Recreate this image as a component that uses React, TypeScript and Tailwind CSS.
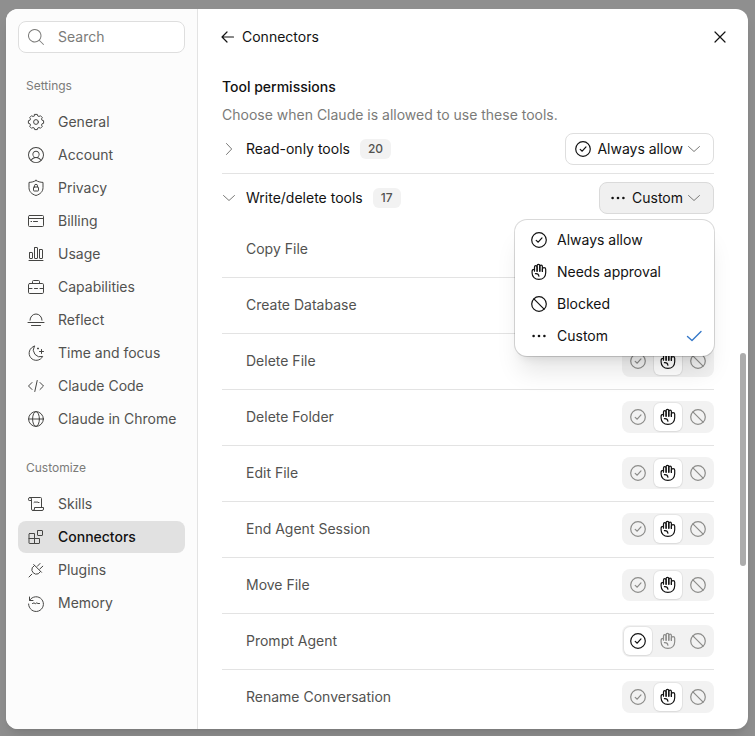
import type { ReactNode } from "react"
import { PiMagnifyingGlassLight, PiUserCircleLight } from "react-icons/pi"
import clsx from "clsx"

type Permission = "allow" | "approval" | "blocked"

function Icon({ children, className }: { children: ReactNode; className?: string }) {
  return (
    <svg
      viewBox="0 0 20 20"
      fill="none"
      stroke="currentColor"
      strokeLinecap="round"
      strokeLinejoin="round"
      aria-hidden="true"
      className={clsx("size-5 shrink-0", className)}
    >
      {children}
    </svg>
  )
}

const AllowIcon = () => (
  <Icon>
    <g strokeWidth="1.2">
      <circle cx="10" cy="10" r="7.3" />
      <path d="m7.2 10.4 2 1.8 3.8-4.3" />
    </g>
  </Icon>
)

const HandIcon = () => (
  <Icon>
    <g strokeWidth="1.2">
      <path d="M5.5 9.2V4.9a1.3 1.3 0 0 1 2.6 0v4.3" />
      <path d="M8.1 9.2V3.7a1.35 1.35 0 0 1 2.7 0v5.5" />
      <path d="M10.8 9.2V4.5a1.3 1.3 0 0 1 2.6 0v4.9" />
      <path d="M13.4 9.4V7.2a1.65 1.65 0 0 1 3.3 0v3.6c0 4-2.8 6.6-6.8 6.6s-6.8-2.5-6.8-6.3V9.2c0-1.1.9-1.8 2.4-1.8" />
      <path d="M6.4 11.6c2-.2 3.3.8 3.5 2.6" />
    </g>
  </Icon>
)

const BlockedIcon = () => (
  <Icon>
    <g strokeWidth="1.2">
      <circle cx="10" cy="10" r="7.3" />
      <path d="m4.9 4.9 10.2 10.2" />
    </g>
  </Icon>
)

const DotsIcon = () => (
  <Icon>
    <g fill="currentColor" stroke="none">
      <circle cx="4.6" cy="10" r="1.3" />
      <circle cx="10" cy="10" r="1.3" />
      <circle cx="15.4" cy="10" r="1.3" />
    </g>
  </Icon>
)

const ChevronDown = () => (
  <svg viewBox="0 0 14 14" fill="none" stroke="currentColor" strokeLinecap="round" strokeLinejoin="round" aria-hidden="true" className="size-3.5 shrink-0 text-[#7a7a78]">
    <path d="m1.5 4.5 5.5 5 5.5-5" />
  </svg>
)

const ChevronRight = () => (
  <svg viewBox="0 0 14 14" fill="none" stroke="currentColor" strokeLinecap="round" strokeLinejoin="round" aria-hidden="true" className="size-3.5 shrink-0 text-[#7a7a78]">
    <path d="M4.5 1.5 9.7 7l-5.2 5.5" />
  </svg>
)

const settings = [
  {
    name: "General",
    icon: (
      <Icon>
        <path d="M8.7 2.4h2.6l.4 1.5 1.4.6 1.3-.8 1.9 1.9-.8 1.3.6 1.4 1.5.4v2.6l-1.5.4-.6 1.4.8 1.3-1.9 1.9-1.3-.8-1.4.6-.4 1.5H8.700l-.4-1.500-1.400-.6-1.300.8-1.900-1.900.8-1.300-.6-1.400-1.500-.4V8.700l1.500-.4.6-1.400-.8-1.300 1.900-1.900 1.300.8 1.400-.6Z" />
        <circle cx="10" cy="10" r="2.4" />
      </Icon>
    ),
  },
  { name: "Account", icon: <PiUserCircleLight className="size-5 shrink-0" /> },
  {
    name: "Privacy",
    icon: (
      <Icon>
        <path d="M10 2.5c2 1.2 4.4 1.8 7 1.9v5.2c0 3.8-2.4 6.5-7 7.9-4.6-1.4-7-4.1-7-7.9V4.4c2.6-.1 5-.7 7-1.9Z" />
        <rect x="7.5" y="9" width="5" height="4" rx=".6" />
        <path d="M8.5 9V7.8a1.5 1.5 0 0 1 3 0V9" />
      </Icon>
    ),
  },
  {
    name: "Billing",
    icon: (
      <Icon>
        <rect x="2.5" y="4.5" width="15" height="11" rx="1" />
        <path d="M2.5 7.5h15M5 10.5h.6M7.5 10.5h4" />
      </Icon>
    ),
  },
  {
    name: "Usage",
    icon: (
      <Icon>
        <rect x="3.5" y="8.5" width="3" height="6" rx=".4" />
        <rect x="8.5" y="3.5" width="3" height="11" rx=".4" />
        <rect x="13.5" y="5.5" width="3" height="9" rx=".4" />
        <path d="M3 16.5h14" />
      </Icon>
    ),
  },
  {
    name: "Capabilities",
    icon: (
      <Icon>
        <rect x="2.5" y="6.5" width="15" height="10" rx="1.2" />
        <path d="M6.5 6.5v-2a1 1 0 0 1 1-1h5a1 1 0 0 1 1 1v2M2.5 11.5H6M8.5 11.5h3M14 11.5h3.5" />
      </Icon>
    ),
  },
  {
    name: "Reflect",
    icon: (
      <Icon>
        <path d="M4 10.2a6 6.2 0 0 1 12 0M2 12.5h16M5.5 15.5h9" />
      </Icon>
    ),
  },
  {
    name: "Time and focus",
    icon: (
      <Icon>
        <path d="M8.3 3.2a7.2 7.2 0 1 0 8.4 10.2A7 7 0 0 1 8.300 3.200ZM15.500 6.500v4M13.500 8.500h4M12 5v1M11.500 5.500h1" />
      </Icon>
    ),
  },
  {
    name: "Claude Code",
    icon: (
      <Icon>
        <path d="M6 6.5 2.5 10 6 13.5M14 6.5l3.5 3.5-3.5 3.5M11.2 4.5 8.8 15.5" />
      </Icon>
    ),
  },
  {
    name: "Claude in Chrome",
    icon: (
      <Icon>
        <circle cx="10" cy="10" r="7.4" />
        <ellipse cx="10" cy="10" rx="3.4" ry="7.4" />
        <path d="M2.6 10h14.8" />
      </Icon>
    ),
  },
]

const customize = [
  {
    name: "Skills",
    icon: (
      <Icon>
        <path d="M5.5 6.5H3.2a.7.7 0 0 1-.7-.7V5A1.5 1.5 0 0 1 4 3.5h10.5a1 1 0 0 1 1 1v9M4 3.5A1.5 1.5 0 0 1 5.5 5v10A1.5 1.5 0 0 0 7 16.5h9a1.5 1.5 0 0 0 1.5-1.500v-1.500h-9V15A1.500 1.500 0 0 1 7 16.500M8 8.500l1-.8 1 .8 1-.8 1 .8h1" />
      </Icon>
    ),
  },
  {
    name: "Connectors",
    icon: (
      <Icon>
        <path d="M3.5 6.5h5v10h-5a.5.5 0 0 1-.5-.5V7a.5.5 0 0 1 .5-.5ZM3 11.5h10.5V16a.5.5 0 0 1-.5.5H8.5" />
        <rect x="11.5" y="3.5" width="5" height="5" rx=".5" />
      </Icon>
    ),
  },
  {
    name: "Plugins",
    icon: (
      <Icon>
        <path d="m7.7 4.5 7.8 7.8M3 17l2.800-2.800M8.600 5.400 6.200 7.800a4.600 4.600 0 0 0 6 6l2.400-2.400M11.300 6.300l2.700-2.800M13.800 9l3-2.800" />
      </Icon>
    ),
  },
  {
    name: "Memory",
    icon: (
      <Icon>
        <path d="M3.5 4v3.5H7M3.7 7.2A7.4 7.4 0 1 1 2.6 11M6.5 10.5l1.5-.6 1.3.8 1.4-.8 1.3.6h1.5" />
      </Icon>
    ),
  },
]

const options = [
  { name: "Always allow", icon: <AllowIcon /> },
  { name: "Needs approval", icon: <HandIcon /> },
  { name: "Blocked", icon: <BlockedIcon /> },
  { name: "Custom", icon: <DotsIcon />, selected: true },
]

const permissions: { value: Permission; label: string; icon: ReactNode }[] = [
  { value: "allow", label: "Always allow", icon: <AllowIcon /> },
  { value: "approval", label: "Needs approval", icon: <HandIcon /> },
  { value: "blocked", label: "Blocked", icon: <BlockedIcon /> },
]

const tools: { name: string; permission: Permission }[] = [
  { name: "Copy File", permission: "approval" },
  { name: "Create Database", permission: "approval" },
  { name: "Delete File", permission: "approval" },
  { name: "Delete Folder", permission: "approval" },
  { name: "Edit File", permission: "approval" },
  { name: "End Agent Session", permission: "approval" },
  { name: "Move File", permission: "approval" },
  { name: "Prompt Agent", permission: "allow" },
  { name: "Rename Conversation", permission: "approval" },
]

function NavGroup({ title, items }: { title: string; items: { name: string; icon: ReactNode }[] }) {
  return (
    <div className="mt-[23px]">
      <h2 className="mb-2.5 px-2 text-xs leading-5 text-[#7b7b79]">{title}</h2>
      <ul className="flex flex-col gap-px">
        {items.map((item) => {
          const active = item.name === "Connectors"
          return (
            <li key={item.name}>
              <button
                type="button"
                aria-current={active ? "page" : undefined}
                className={clsx(
                  "flex h-8 w-full items-center gap-3 rounded-lg px-2 whitespace-nowrap",
                  active ? "bg-[#e1e1e1] font-medium text-[#121212]" : "text-[#525250]"
                )}
              >
                <span className="text-[#454543]">{item.icon}</span>
                {item.name}
              </button>
            </li>
          )
        })}
      </ul>
    </div>
  )
}

function ToolRow({ name, permission }: { name: string; permission: Permission }) {
  return (
    <li className="flex h-14 items-center justify-between border-b border-[#e3e3e3] pb-px pl-6 last:border-transparent">
      <span className="text-[#525250]">{name}</span>
      <div role="group" aria-label={name} className="flex gap-0.5 rounded-lg bg-[#f2f2f2] p-0.5">
        {permissions.map((p) => (
          <button
            key={p.value}
            type="button"
            aria-label={p.label}
            aria-pressed={p.value === permission}
            className={clsx(
              "flex size-7 items-center justify-center rounded-md",
              p.value === permission ? "bg-white text-[#121212] shadow-xs ring-1 ring-black/5" : "text-[#8c8c8a]"
            )}
          >
            {p.icon}
          </button>
        ))}
      </div>
    </li>
  )
}

export default function App() {
  return (
    <div className="h-screen bg-[#8f8f8f] pt-[9px] pr-[7px] pb-[7px] pl-1.5 font-['Inter',sans-serif] text-sm text-[#121212]">
      <div role="dialog" aria-label="Settings" className="relative flex h-full overflow-hidden rounded-xl bg-white shadow-lg">
        {/* Sidebar */}
        <nav className="w-48 shrink-0 border-r border-[#e3e3e3] bg-[#fcfcfc] p-3">
          <label className="flex h-8 items-center gap-3 rounded-lg border border-[#dedede] bg-white px-[7px] text-[#7b7b79]">
            <PiMagnifyingGlassLight className="size-5 shrink-0" />
            <input type="search" aria-label="Search" placeholder="Search" className="w-full min-w-0 outline-none placeholder:text-[#7b7b79]" />
          </label>
          <NavGroup title="Settings" items={settings} />
          <NavGroup title="Customize" items={customize} />
        </nav>

        {/* Main panel */}
        <main className="flex min-w-0 flex-1 flex-col">
          <header className="flex h-14 shrink-0 items-center justify-between pr-[18px] pl-5">
            <button type="button" className="flex items-center gap-1">
              <Icon>
                <path d="M15.5 10h-11M9 5l-5 5 5 5" strokeWidth="1.2" />
              </Icon>
              Connectors
            </button>
            <button type="button" aria-label="Close">
              <Icon>
                <path d="m5 5 10 10M15 5 5 15" strokeWidth="1.2" />
              </Icon>
            </button>
          </header>

          <div className="min-h-0 flex-1 overflow-hidden pt-3 pr-[34px] pl-6">
            <h3 className="mb-2 leading-5 font-medium">Tool permissions</h3>
            <p className="leading-5 text-[#7b7b79]">Choose when Claude is allowed to use these tools.</p>

            <div className="flex items-center justify-between border-b border-[#e3e3e3] py-2">
              <button type="button" aria-expanded="false" className="flex items-center gap-2.5">
                <ChevronRight />
                Read-only tools
                <span className="rounded-md bg-[#f2f2f2] px-2 text-xs leading-5 font-medium text-[#525250]">20</span>
              </button>
              <button type="button" className="flex h-8 items-center gap-1 rounded-lg border border-[#dedede] pr-3 pl-[7px]">
                <AllowIcon />
                Always allow
                <ChevronDown />
              </button>
            </div>

            <div className="flex items-center justify-between py-2">
              <button type="button" aria-expanded="true" className="flex items-center gap-2.5">
                <ChevronDown />
                Write/delete tools
                <span className="rounded-md bg-[#f2f2f2] px-2 text-xs leading-5 font-medium text-[#525250]">17</span>
              </button>
              <div className="relative">
                <button type="button" aria-expanded="true" aria-haspopup="menu" className="flex h-8 items-center gap-1 rounded-lg border border-[#dadada] bg-[#f0f0f0] pr-3 pl-2">
                  <DotsIcon />
                  Custom
                  <ChevronDown />
                </button>
                <div role="menu" className="absolute top-full right-0 z-10 mt-1.5 w-[199px] rounded-xl bg-white py-1 shadow-xl ring-1 ring-black/15">
                  {options.map((option) => (
                    <button key={option.name} type="button" role="menuitemradio" aria-checked={!!option.selected} className="flex h-8 w-full items-center gap-2 pr-2.5 pl-3.5">
                      {option.icon}
                      <span className="flex-1 text-left">{option.name}</span>
                      {option.selected && (
                        <Icon className="text-[#3578c9]">
                          <path d="m3.5 10.5 4.5 4L17 5.5" strokeWidth="1.4" />
                        </Icon>
                      )}
                    </button>
                  ))}
                </div>
              </div>
            </div>

            <ul>
              {tools.map((tool) => (
                <ToolRow key={tool.name} {...tool} />
              ))}
            </ul>
          </div>
        </main>

        {/* Scroll thumb */}
        <div className="absolute top-[344px] right-0.5 h-[213px] w-1.5 rounded-full bg-[#acacac]" />
      </div>
    </div>
  )
}
